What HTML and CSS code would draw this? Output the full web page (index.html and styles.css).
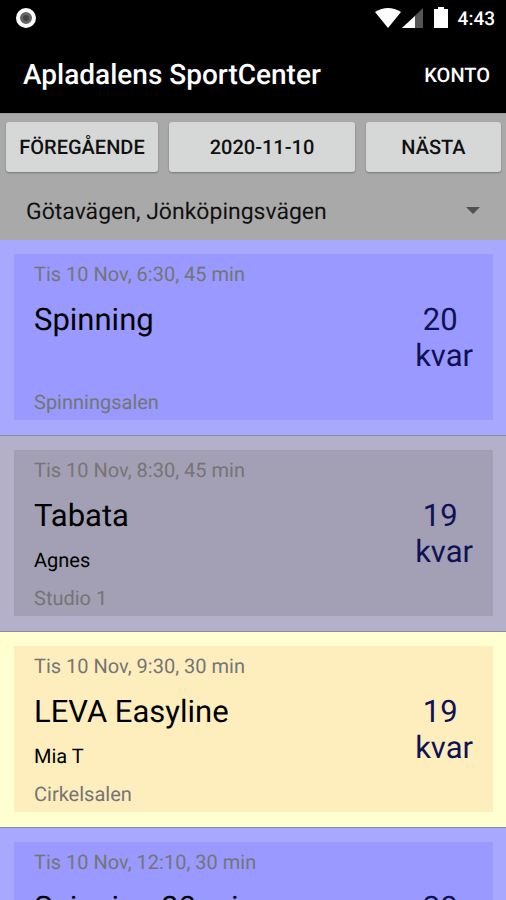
FILE: index.html
```html
<!DOCTYPE html>
<html lang="sv">
<head>
  <meta charset="UTF-8" />
  <meta name="viewport" content="width=device-width, initial-scale=1" />
  <title>Apladalens SportCenter</title>
  <link rel="stylesheet" href="styles.css">
</head>
<body>

<header>
  <div class="status-bar">
    <svg width="22" height="22" viewBox="0 0 22 22" aria-hidden="true">
      <circle cx="11" cy="11" r="8" fill="#666" stroke="#fff" stroke-width="4" />
      <circle cx="11" cy="11" r="3" fill="#444" />
    </svg>
    <div class="status-icons">
      <svg width="49" height="22" viewBox="0 0 49 22" aria-hidden="true">
        <path d="M0 5Q13 -3 26 5L13 21Z" fill="#fff" />
        <path d="M27 21L48 1V21Z" fill="#555" />
        <path d="M27 21L40 9V21Z" fill="#fff" />
      </svg>
      <svg width="14" height="22" viewBox="0 0 14 22" aria-hidden="true">
        <path d="M4 0H10V2H14V21H0V2H4Z" fill="#fff" />
      </svg>
      <span class="clock">4:43</span>
    </div>
  </div>
  <div class="app-bar">
    <h1>Apladalens SportCenter</h1>
    <button class="account-btn">KONTO</button>
  </div>
</header>

<div class="filters">
  <div class="day-nav">
    <button>FÖREGÅENDE</button>
    <button>2020-11-10</button>
    <button>NÄSTA</button>
  </div>
  <div class="location">
    <select aria-label="Anläggning">
      <option>Götavägen, Jönköpingsvägen</option>
    </select>
    <svg class="arrow" width="14" height="8" viewBox="0 0 14 8" aria-hidden="true">
      <path d="M0 0H14L7 7Z" fill="#505050" />
    </svg>
  </div>
</div>

<main class="classes">
  <article class="class-row blue">
    <div class="card">
      <div class="info">
        <p class="meta">Tis 10 Nov, 6:30, 45 min</p>
        <h2>Spinning</h2>
        <p class="leader"></p>
        <p class="meta">Spinningsalen</p>
      </div>
      <div class="slots">20 
kvar</div>
    </div>
  </article>

  <article class="class-row gray">
    <div class="card">
      <div class="info">
        <p class="meta">Tis 10 Nov, 8:30, 45 min</p>
        <h2>Tabata</h2>
        <p class="leader">Agnes</p>
        <p class="meta">Studio 1</p>
      </div>
      <div class="slots">19 
kvar</div>
    </div>
  </article>

  <article class="class-row yellow">
    <div class="card">
      <div class="info">
        <p class="meta">Tis 10 Nov, 9:30, 30 min</p>
        <h2>LEVA Easyline</h2>
        <p class="leader">Mia T</p>
        <p class="meta">Cirkelsalen</p>
      </div>
      <div class="slots">19 
kvar</div>
    </div>
  </article>

  <article class="class-row blue">
    <div class="card">
      <div class="info">
        <p class="meta">Tis 10 Nov, 12:10, 30 min</p>
        <h2>Spinning 30 min</h2>
        <p class="leader"></p>
        <p class="meta">Spinningsalen</p>
      </div>
      <div class="slots">20 
kvar</div>
    </div>
  </article>
</main>

</body>
</html>
```
FILE: styles.css
```css
* {
  box-sizing: border-box;
}

body {
  font-family: Roboto, sans-serif;
  text-rendering: geometricPrecision;
  margin: 0;
  height: 100vh;
  display: flex;
  flex-direction: column;
  background: #a9a9a9;
  color: #000;
}

h1, h2, p {
  margin: 0;
}

button, select {
  font-family: inherit;
  text-rendering: inherit;
  border: none;
  cursor: pointer;
}

header {
  background: #000;
  color: #fff;
}

.status-bar {
  display: flex;
  justify-content: space-between;
  align-items: center;
  height: 36px;
  padding: 0 11px 0 15px;
}

.status-icons {
  display: flex;
  align-items: center;
  gap: 10px;
}

.clock {
  font-size: 19px;
  font-weight: 500;
}

.app-bar {
  display: flex;
  justify-content: space-between;
  align-items: center;
  height: 77px;
  padding: 0 16px 0 23px;
}

.app-bar h1 {
  font-size: 28px;
  font-weight: 500;
}

.account-btn {
  background: none;
  color: #fff;
  font-size: 20px;
  font-weight: 500;
  padding: 0;
}

.filters {
  background: #a9a9a9;
  border-top: 1px solid #999;
}

.day-nav {
  display: grid;
  grid-template-columns: 152fr 186fr 135fr;
  gap: 11px;
  padding: 8px 5px 10px 6px;
}

.day-nav button {
  height: 50px;
  padding: 0;
  border-radius: 3px;
  background: #d6d8d7;
  box-shadow: 0 1px 2px rgba(0, 0, 0, 0.3);
  color: #111;
  font-size: 20px;
  font-weight: 500;
}

.location {
  display: flex;
  align-items: center;
  position: relative;
}

.location select {
  flex: 1;
  height: 58px;
  padding: 0 48px 0 26px;
  appearance: none;
  background: none;
  color: #111;
  font-size: 23px;
}

.arrow {
  position: absolute;
  right: 26px;
  pointer-events: none;
}

.classes {
  flex: 1;
  min-height: 0;
  overflow-y: auto;
  scrollbar-width: none;
}

.class-row {
  padding: 14px 13px 15px 14px;
  border-bottom: 1px solid #8c8c9c;
}

.card {
  display: flex;
  justify-content: space-between;
  min-height: 166px;
  padding: 8px 20px 5px 20px;
}

.blue {
  background: #a8a8ff;
}

.blue .card {
  background: #9999ff;
}

.gray {
  background: #b4b0c9;
}

.gray .card {
  background: #a39fb5;
}

.yellow {
  background: #ffffd2;
}

.yellow .card {
  background: #feeebe;
}

.info {
  display: flex;
  flex-direction: column;
}

.meta {
  color: #757575;
  font-size: 20px;
  line-height: 24px;
}

.info h2 {
  font-size: 31px;
  font-weight: 400;
  line-height: 36px;
  margin: 16px 0 14px;
}

.leader {
  height: 24px;
  margin-bottom: 14px;
  font-size: 20px;
  line-height: 24px;
}

.slots {
  padding-top: 40px;
  color: #111155;
  font-size: 31px;
  line-height: 36px;
  text-align: center;
  white-space: pre;
}
```
